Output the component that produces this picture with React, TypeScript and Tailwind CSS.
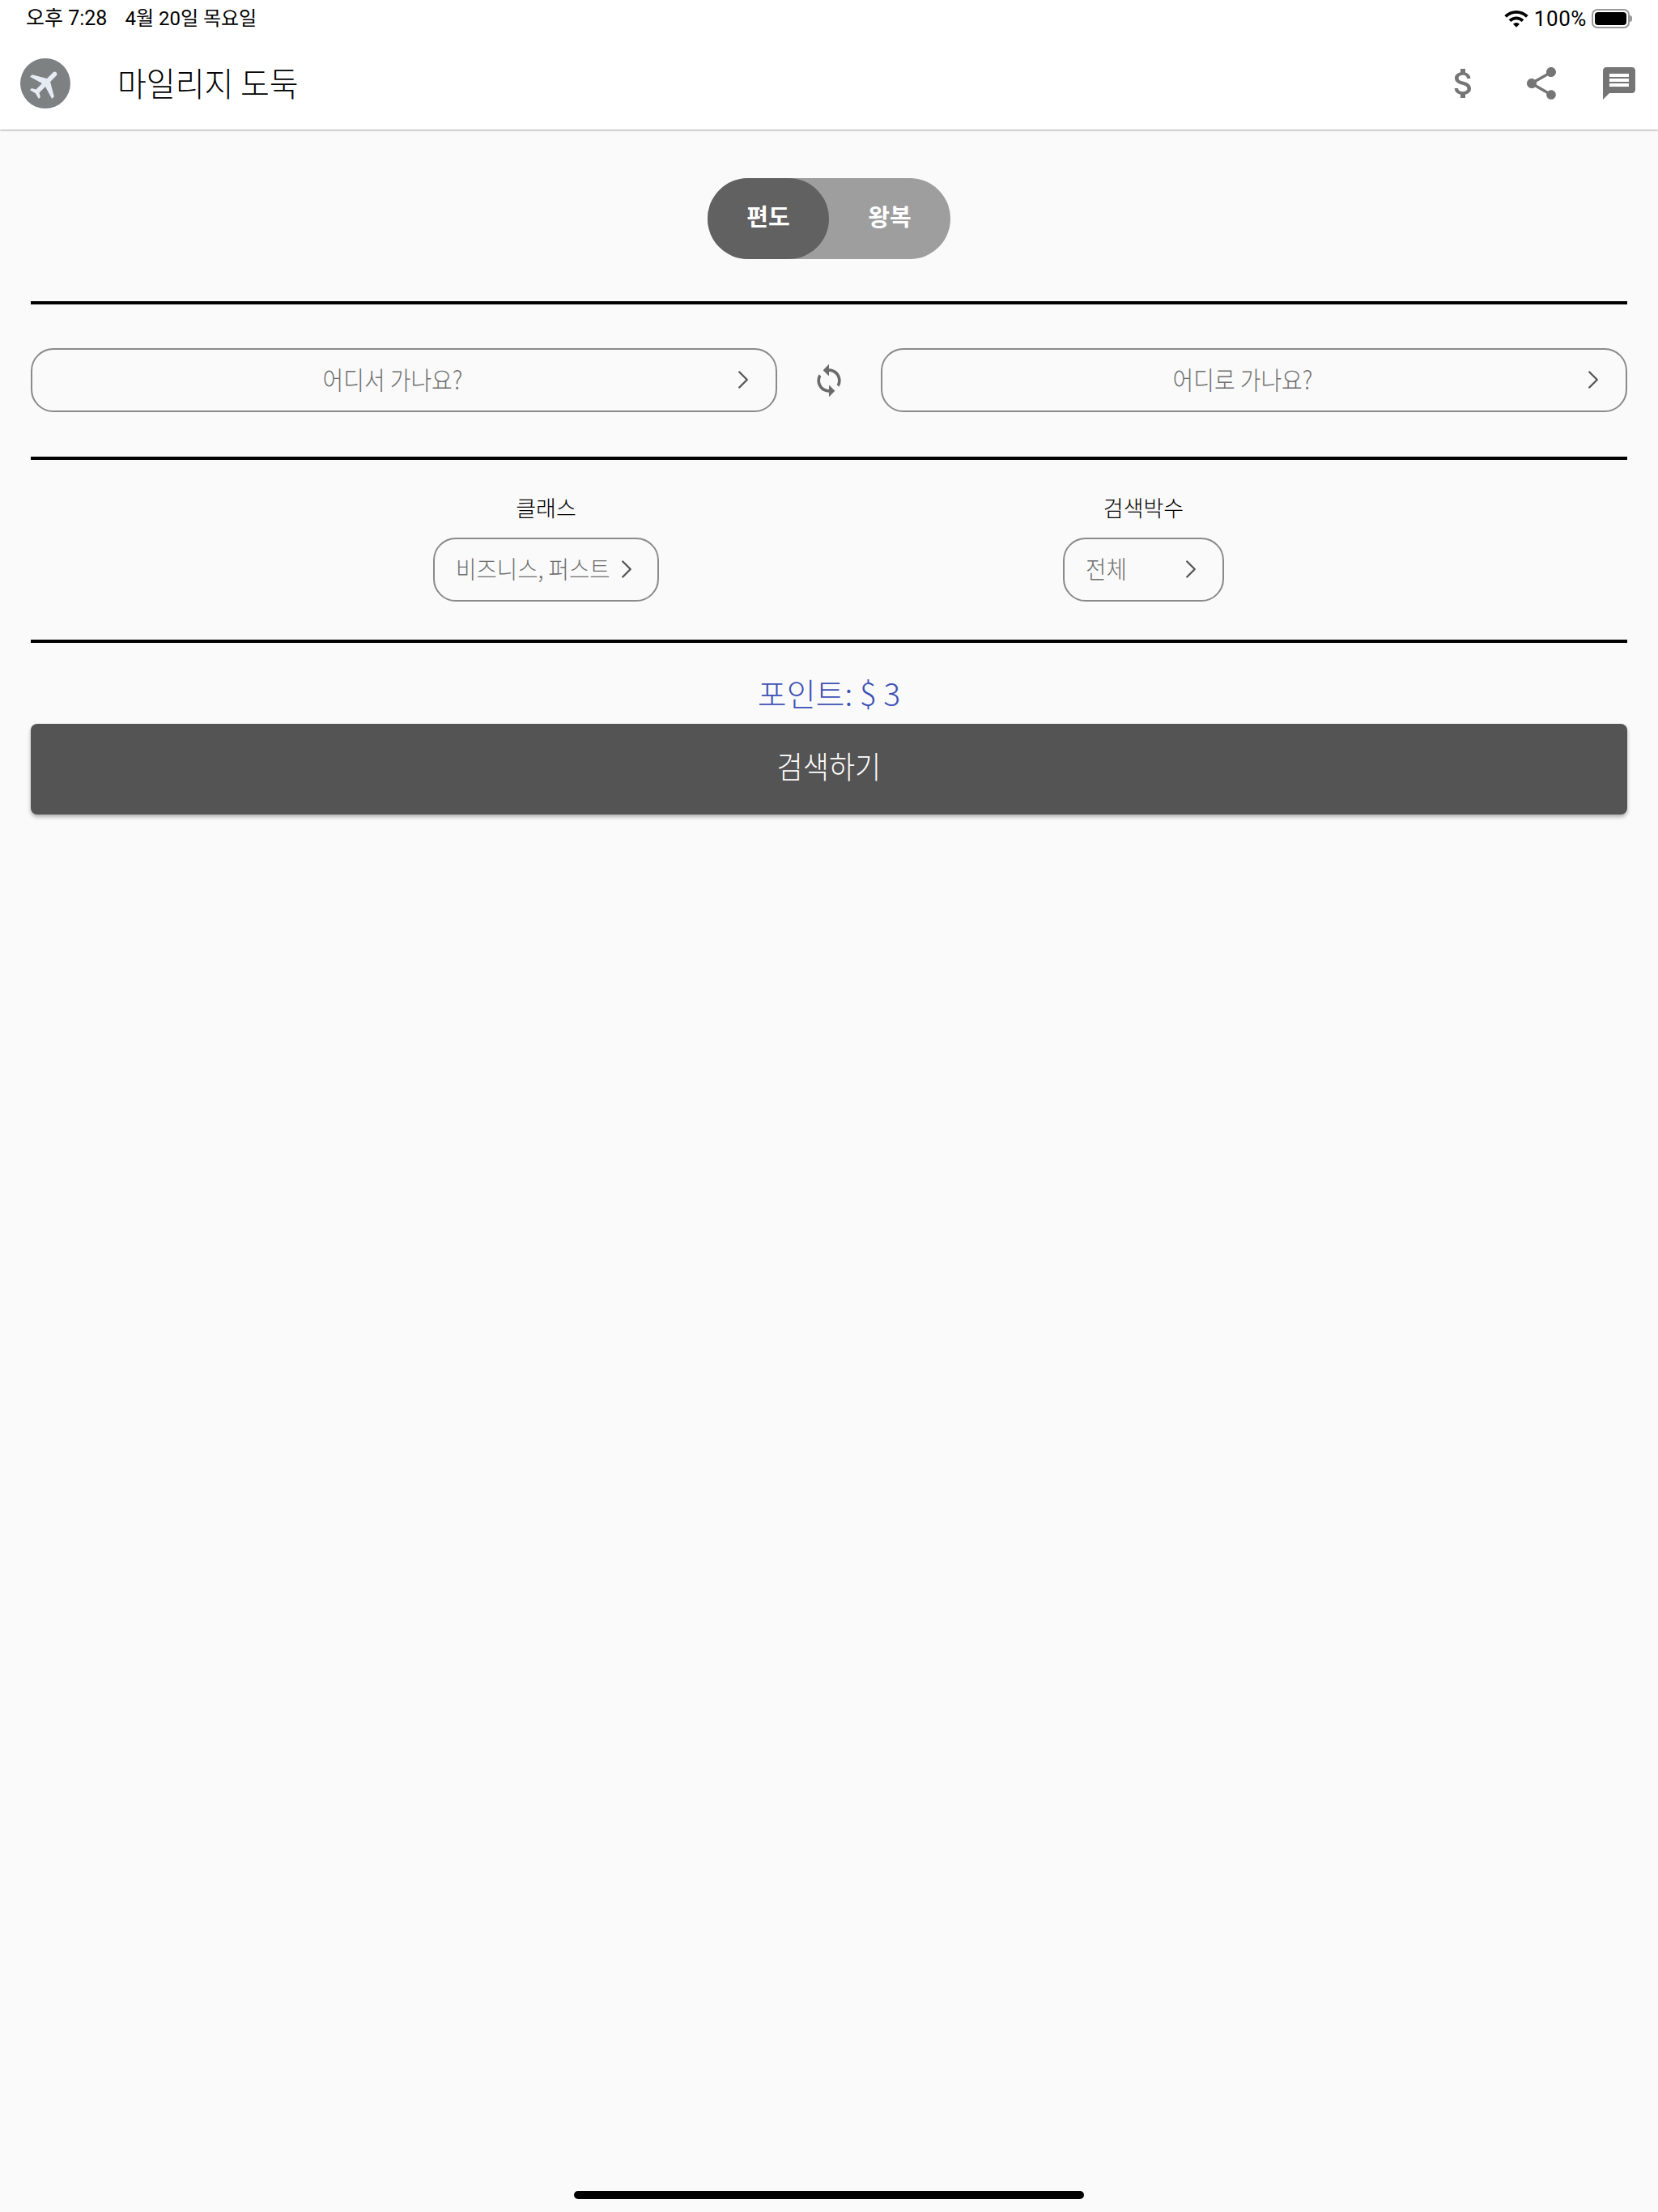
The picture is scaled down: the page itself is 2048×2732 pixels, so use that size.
import React from 'react';
import { MdAirplanemodeActive, MdAttachMoney, MdShare, MdMessage, MdSync, MdWifi } from 'react-icons/md';
import { ChevronRight } from 'lucide-react';

const KR = "font-['Noto_Sans_CJK_KR',sans-serif] font-light";

const Divider = () => <div className="h-1 bg-black" />;

const Pill = ({ text, className }: { text: string; className: string }) => (
  <div className={`relative flex h-[79px] items-center rounded-[28px] border-2 border-[#8a8a8a] pr-[28px] pb-[5px] ${className}`}>
    <span className={`${KR} text-[31px] leading-none text-[#6f6f6f] scale-x-90`}>{text}</span>
    <ChevronRight className="absolute right-[21px] top-[18px] text-[#555]" size={38} strokeWidth={1.5} />
  </div>
);

const Picker = ({ label, value, className, chevron }: { label: string; value: string; className: string; chevron: string }) => (
  <div className="flex flex-col items-center">
    <span className={`${KR} text-[27px] leading-none text-black mb-[24px] -mt-[4px]`}>{label}</span>
    <div className={`relative flex h-[79px] items-center rounded-[28px] border-2 border-[#8a8a8a] pl-[26px] pb-[6px] ${className}`}>
      <span className={`${KR} text-[30px] leading-none text-[#6f6f6f] origin-left scale-x-[0.92] whitespace-nowrap`}>{value}</span>
      <ChevronRight className={`absolute top-[18px] text-[#555] ${chevron}`} size={38} strokeWidth={1.5} />
    </div>
  </div>
);

export default function App() {
  return (
    <div className="flex min-h-[2732px] flex-col bg-[#fafafa]">
      <header className="h-[160px] bg-white shadow-[0_1px_2px_rgba(0,0,0,0.35)]">
        {/* status bar */}
        <div className="flex h-[46px] items-center justify-between pl-[32px] pr-[32px] font-['Roboto','Noto_Sans_CJK_KR',sans-serif] text-[24px] text-black">
          <div className="flex items-center gap-[22px]">
            <span className="text-[25px]">오후 7:28</span>
            <span>4월 20일 목요일</span>
          </div>
          <div className="flex items-center gap-[6px]">
            <MdWifi size={32} />
            <span className="text-[26px] tracking-[0.6px]">100%</span>
            <div className="flex items-center">
              <div className="h-[24px] w-[47px] rounded-[7px] border-2 border-[#999] p-[2px]">
                <div className="h-full w-full rounded-[4px] bg-black" />
              </div>
              <div className="h-[8px] w-[3px] rounded-r-full bg-[#999]" />
            </div>
          </div>
        </div>
        {/* app bar */}
        <div className="flex h-[114px] items-center pl-[25px] pr-[24px]">
          <div className="flex h-[62px] w-[62px] items-center justify-center rounded-full bg-[#7d8182]">
            <MdAirplanemodeActive size={46} className="rotate-45 text-[#e6ecf3]" />
          </div>
          <h1 className={`${KR} mb-[4px] ml-[58px] origin-left scale-x-[0.95] text-[41px] leading-none text-black`}>마일리지 도둑</h1>
          <div className="ml-auto flex items-center gap-[48px] text-[#757575]">
            <MdAttachMoney size={48} />
            <MdShare size={48} />
            <MdMessage size={48} />
          </div>
        </div>
      </header>

      <main className="flex flex-col px-[38px] pt-[60px]">
        <div className="flex justify-center">
          <div className="flex h-[100px] w-[300px] rounded-full bg-[#9e9e9e] text-[29px] font-bold leading-none text-white font-['Noto_Sans_CJK_KR',sans-serif]">
            <div className="flex w-[150px] items-center justify-center rounded-full bg-[#616161] pb-[8px]">편도</div>
            <div className="flex w-[150px] items-center justify-center pb-[8px]">왕복</div>
          </div>
        </div>
        <div className="mt-[52px]"><Divider /></div>

        <div className="mt-[54px] flex items-center">
          <Pill text="어디서 가나요?" className="flex-1 justify-center" />
          <div className="flex w-[128px] justify-center">
            <MdSync size={44} className="text-[#6b6b6b]" />
          </div>
          <Pill text="어디로 가나요?" className="flex-1 justify-center" />
        </div>
        <div className="mt-[55px]"><Divider /></div>

        <div className="mt-[49px] flex">
          <div className="flex w-[972px] justify-end pr-[196px]">
            <Picker label="클래스" value="비즈니스, 퍼스트" className="w-[279px]" chevron="right-[19px]" />
          </div>
          <div className="ml-[303px]">
            <Picker label="검색박수" value="전체" className="w-[199px]" chevron="right-[20px]" />
          </div>
        </div>
        <div className="mt-[47px]"><Divider /></div>

        <p className={`${KR} mt-[42px] text-center text-[39px] leading-none text-[#3f51b5]`}>포인트: $ 3</p>
        <button className={`${KR} mt-[19px] flex h-[112px] items-start justify-center rounded-[8px] bg-[#545454] pt-[32px] text-[38px] leading-none text-white shadow-[0_3px_5px_rgba(0,0,0,0.3)]`}>
          <span className="scale-x-[0.92]">검색하기</span>
        </button>
      </main>

      <div className="mt-auto flex justify-center pb-[16px]">
        <div className="h-[10px] w-[630px] rounded-full bg-black" />
      </div>
    </div>
  );
}
